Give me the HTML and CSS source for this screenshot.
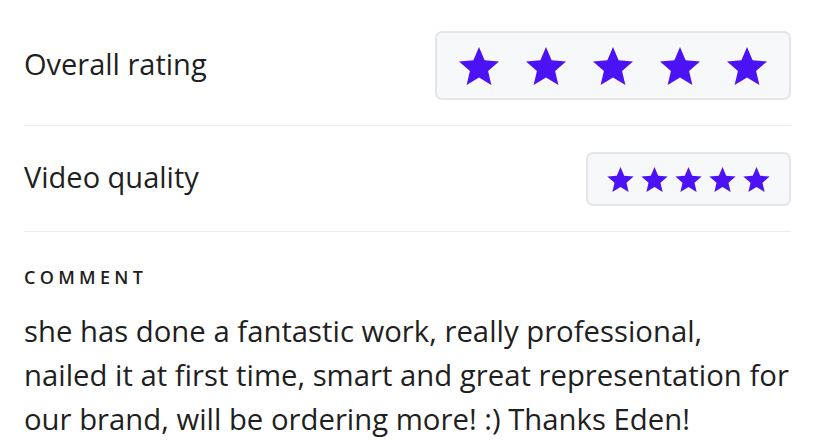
FILE: index.html
```html
<!doctype html>
<html lang="en">
  <head>
    <meta charset="UTF-8" />
    <meta name="viewport" content="width=device-width, initial-scale=1.0" />
    <title>Review</title>
    <link rel="stylesheet" href="styles.css">
  </head>

  <body>
    <div class="review">
      <div class="rating-row">
        <span class="rating-label">Overall rating</span>
        <div class="stars stars-big">
          <svg viewBox="2 2 20 19"><polygon points="12 17.27 18.18 21 16.54 13.97 22 9.24 14.81 8.63 12 2 9.19 8.63 2 9.24 7.46 13.97 5.82 21" /></svg>
          <svg viewBox="2 2 20 19"><polygon points="12 17.27 18.18 21 16.54 13.97 22 9.24 14.81 8.63 12 2 9.19 8.63 2 9.24 7.46 13.97 5.82 21" /></svg>
          <svg viewBox="2 2 20 19"><polygon points="12 17.27 18.18 21 16.54 13.97 22 9.24 14.81 8.63 12 2 9.19 8.63 2 9.24 7.46 13.97 5.82 21" /></svg>
          <svg viewBox="2 2 20 19"><polygon points="12 17.27 18.18 21 16.54 13.97 22 9.24 14.81 8.63 12 2 9.19 8.63 2 9.24 7.46 13.97 5.82 21" /></svg>
          <svg viewBox="2 2 20 19"><polygon points="12 17.27 18.18 21 16.54 13.97 22 9.24 14.81 8.63 12 2 9.19 8.63 2 9.24 7.46 13.97 5.82 21" /></svg>
        </div>
      </div>

      <div class="rating-row">
        <span class="rating-label">Video quality</span>
        <div class="stars stars-small">
          <svg viewBox="2 2 20 19"><polygon points="12 17.27 18.18 21 16.54 13.97 22 9.24 14.81 8.63 12 2 9.19 8.63 2 9.24 7.46 13.97 5.82 21" /></svg>
          <svg viewBox="2 2 20 19"><polygon points="12 17.27 18.18 21 16.54 13.97 22 9.24 14.81 8.63 12 2 9.19 8.63 2 9.24 7.46 13.97 5.82 21" /></svg>
          <svg viewBox="2 2 20 19"><polygon points="12 17.27 18.18 21 16.54 13.97 22 9.24 14.81 8.63 12 2 9.19 8.63 2 9.24 7.46 13.97 5.82 21" /></svg>
          <svg viewBox="2 2 20 19"><polygon points="12 17.27 18.18 21 16.54 13.97 22 9.24 14.81 8.63 12 2 9.19 8.63 2 9.24 7.46 13.97 5.82 21" /></svg>
          <svg viewBox="2 2 20 19"><polygon points="12 17.27 18.18 21 16.54 13.97 22 9.24 14.81 8.63 12 2 9.19 8.63 2 9.24 7.46 13.97 5.82 21" /></svg>
        </div>
      </div>

      <div class="comment">
        <h3 class="comment-title">COMMENT</h3>
        <p class="comment-text">
          she has done a fantastic work, really professional,<br />
          nailed it at first time, smart and great representation for<br />
          our brand, will be ordering more! :) Thanks Eden!
        </p>
      </div>
    </div>
  </body>
</html>
```

FILE: styles.css
```css
body {
  margin: 0;
  background-color: white;
  font-family: "Open Sans", "Liberation Sans", sans-serif;
  color: #1f1f22;
}

.review {
  padding: 5px 31px 0 24px;
}

.rating-row {
  display: flex;
  justify-content: space-between;
  align-items: center;
  padding: 26px 0 25px;
  border-bottom: 1px solid #ececee;
}

.rating-label {
  font-size: 29px;
  line-height: 36px;
  margin-top: -4px;
}

.stars {
  display: flex;
  background-color: #f7f8fa;
  border: 2px solid #e4e5e8;
  border-radius: 7px;
}

.stars svg {
  display: block;
  fill: #4a12f4;
}

.stars-big {
  gap: 27px;
  padding: 14px 22px 13px;
}

.stars-big svg {
  width: 40px;
  height: 38px;
}

.stars-small {
  gap: 7px;
  padding: 13px 19px 12px;
}

.stars-small svg {
  width: 27px;
  height: 25px;
}

.comment {
  padding-top: 33px;
}

.comment-title {
  margin: 0;
  font-size: 18px;
  font-weight: 600;
  letter-spacing: 4.3px;
  line-height: 24px;
}

.comment-text {
  margin: 20px 0 0;
  font-size: 29.3px;
  line-height: 44px;
}
```
